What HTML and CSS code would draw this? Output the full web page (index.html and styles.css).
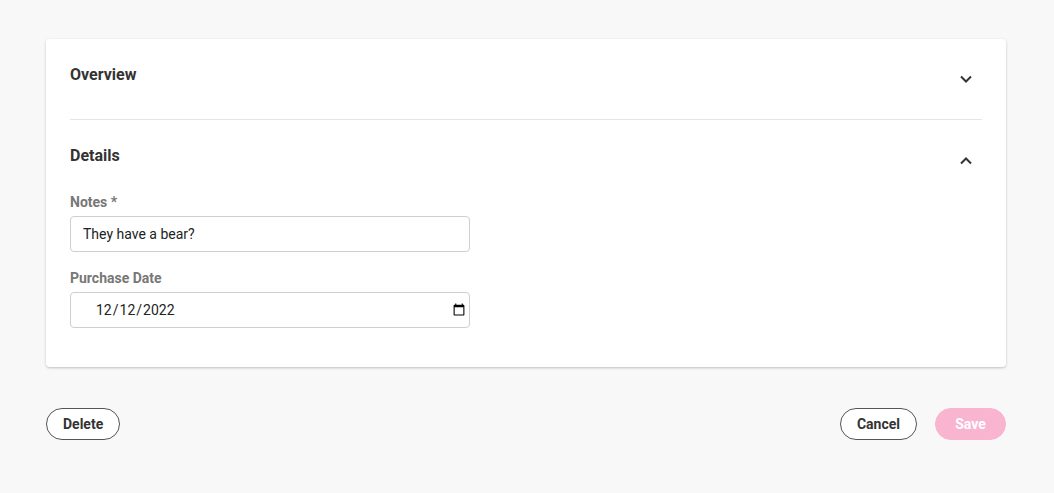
FILE: index.html
```html
<!DOCTYPE html>
<html lang="en">
<head>
<meta charset="utf-8">
<title>Details</title>
<link rel="stylesheet" href="styles.css">
</head>
<body>
<main class="page">
  <section class="card">
    <div class="section section-first">
      <div class="section-head">
        <h2 class="section-title">Overview</h2>
        <button class="chev" type="button" aria-label="Expand">
          <svg width="14" height="10" viewBox="0 0 14 10"><path d="M2 2.5 L7 7.5 L12 2.5" fill="none" stroke="#333" stroke-width="2"/></svg>
        </button>
      </div>
    </div>
    <div class="section">
      <div class="section-head">
        <h2 class="section-title">Details</h2>
        <button class="chev" type="button" aria-label="Collapse">
          <svg width="14" height="10" viewBox="0 0 14 10"><path d="M2 7.5 L7 2.5 L12 7.5" fill="none" stroke="#333" stroke-width="2"/></svg>
        </button>
      </div>
      <div class="fields">
        <div class="field">
          <label class="label" for="notes">Notes *</label>
          <input class="input" id="notes" type="text" value="They have a bear?">
        </div>
        <div class="field">
          <label class="label" for="pdate">Purchase Date</label>
          <input class="input input-date" id="pdate" type="date" value="2022-12-12">
        </div>
      </div>
    </div>
  </section>
  <div class="actions">
    <button class="btn btn-outline" type="button">Delete</button>
    <div class="actions-right">
      <button class="btn btn-outline" type="button">Cancel</button>
      <button class="btn btn-primary" type="button" disabled>Save</button>
    </div>
  </div>
</main>
</body>
</html>
```
FILE: styles.css
```css
* { box-sizing: border-box; }
html, body { margin: 0; padding: 0; }
body {
  background: #f8f8f8;
  font-family: Roboto, "Liberation Sans", Arial, sans-serif;
  color: #333;
  width: 1054px;
  height: 493px;
  overflow: hidden;
}
.page {
  padding: 39px 48px 0 46px;
}
.card {
  background: #fff;
  border-radius: 4px;
  box-shadow: 0 1px 3px rgba(0,0,0,0.18), 0 1px 2px rgba(0,0,0,0.06);
  padding: 0 24px 39px;
}
.section-first {
  border-bottom: 1px solid #e6e6e6;
}
.section-head {
  display: flex;
  justify-content: space-between;
  align-items: flex-start;
  padding: 24px 0 32px;
}
.section + .section .section-head { padding-bottom: 24px; }
.section-title {
  margin: 0;
  font-size: 16px;
  line-height: 24px;
  font-weight: 700;
  color: #333;
}
.chev {
  border: 0;
  background: transparent;
  padding: 0;
  margin: 11px 9px 0 0;
  width: 14px;
  height: 10px;
  display: flex;
}
.section + .section .chev { margin-top: 12px; }
.fields {
  display: flex;
  flex-direction: column;
  gap: 16px;
}
.field {
  display: flex;
  flex-direction: column;
  gap: 4px;
  width: 400px;
}
.label {
  font-size: 14px;
  line-height: 20px;
  font-weight: 700;
  color: #777;
}
.input {
  height: 36px;
  border: 1px solid #cfcfcf;
  border-radius: 4px;
  padding: 0 12px;
  font-family: Roboto, "Liberation Sans", Arial, sans-serif;
  font-size: 14px;
  color: #222;
  background: #fff;
  outline: none;
}
.input-date {
  padding: 0 1px 0 24px;
}
.actions {
  display: flex;
  justify-content: space-between;
  align-items: center;
  margin-top: 41px;
}
.actions-right {
  display: flex;
  gap: 18px;
}
.btn {
  height: 32px;
  border-radius: 16px;
  padding: 0 16px;
  font-family: Roboto, "Liberation Sans", Arial, sans-serif;
  font-size: 14px;
  font-weight: 700;
  cursor: pointer;
}
.btn-outline {
  background: #fff;
  border: 1px solid #555;
  color: #333;
}
.btn-primary {
  background: #f9b4d0;
  border: 1px solid #f9b4d0;
  color: #fff;
  min-width: 71px;
}
```
